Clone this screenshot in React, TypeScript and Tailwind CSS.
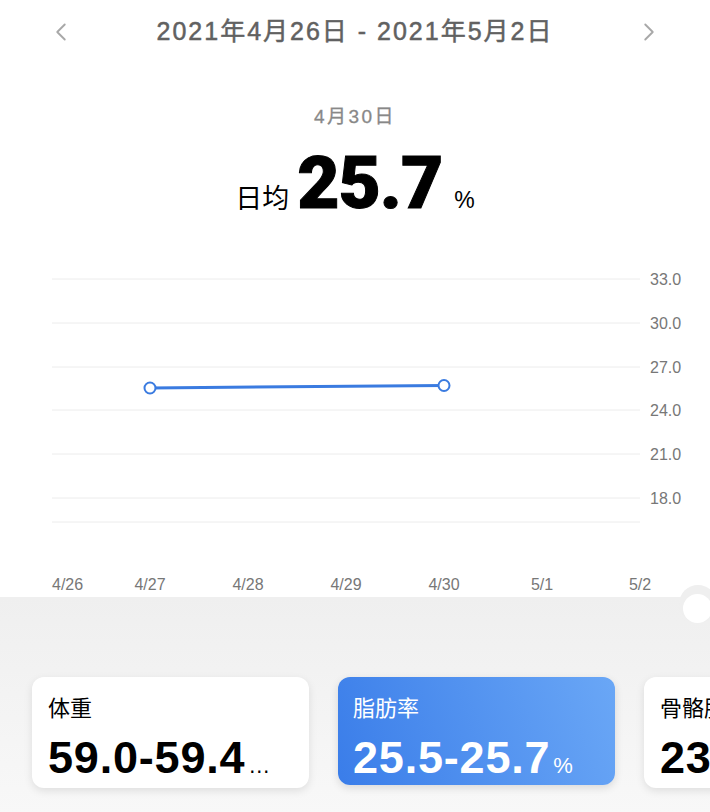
import { ChevronLeft, ChevronRight } from 'lucide-react';

const font = { fontFamily: '"Liberation Sans", "Noto Sans CJK SC", sans-serif' };

const gridY = [29, 73, 117, 160, 204, 248];
const yLabels = ['33.0', '30.0', '27.0', '24.0', '21.0', '18.0'];
const xLabels = [
  { x: 52, t: '4/26', anchor: 'start' },
  { x: 150, t: '4/27', anchor: 'middle' },
  { x: 248, t: '4/28', anchor: 'middle' },
  { x: 346, t: '4/29', anchor: 'middle' },
  { x: 444, t: '4/30', anchor: 'middle' },
  { x: 542, t: '5/1', anchor: 'middle' },
  { x: 640, t: '5/2', anchor: 'middle' },
];

function Chart() {
  return (
    <svg width={710} height={347} className="block">
      {gridY.map((y) => (
        <line key={y} x1={52} x2={640} y1={y} y2={y} stroke="#ececec" strokeWidth={1} />
      ))}
      <line x1={52} x2={640} y1={272} y2={272} stroke="#ececec" strokeWidth={1} />
      {gridY.map((y, i) => (
        <text
          key={i}
          x={650}
          y={y + 5.5}
          fontSize={16}
          fill="#777"
          fontFamily="Liberation Sans, sans-serif"
        >
          {yLabels[i]}
        </text>
      ))}
      <line x1={150} y1={138} x2={444} y2={135.5} stroke="#3a7be0" strokeWidth={3} />
      <circle cx={150} cy={138} r={5.5} fill="#fff" stroke="#3a7be0" strokeWidth={2} />
      <circle cx={444} cy={135.5} r={5.5} fill="#fff" stroke="#3a7be0" strokeWidth={2} />
      {xLabels.map((l) => (
        <text
          key={l.t}
          x={l.x}
          y={340}
          fontSize={16}
          fill="#777"
          textAnchor={l.anchor as 'start' | 'middle'}
          fontFamily="Liberation Sans, sans-serif"
        >
          {l.t}
        </text>
      ))}
    </svg>
  );
}

function Card({
  label,
  value,
  unit,
  active,
}: {
  label: string;
  value: string;
  unit?: string;
  active?: boolean;
}) {
  return (
    <div
      className={
        active
          ? 'w-[277px] h-[108px] shrink-0 rounded-xl px-[15px] pt-[16px] bg-[linear-gradient(70deg,#3a7de9,#6aa7f6)] text-white shadow-[0_3px_8px_rgba(0,0,0,0.12)]'
          : 'w-[277px] h-[111px] shrink-0 rounded-xl px-[16px] pt-[16px] bg-white text-black shadow-[0_3px_8px_rgba(0,0,0,0.10)]'
      }
    >
      <div className="text-[22px] leading-[32px]">{label}</div>
      <div className="mt-[9px] flex items-baseline whitespace-nowrap">
        <span className="text-[45px] leading-[48px] font-bold tracking-[0.8px]">{value}</span>
        {unit && <span className="ml-[3px] text-[22px]">{unit}</span>}
      </div>
    </div>
  );
}

export default function App() {
  return (
    <div className="w-[710px] h-[812px] overflow-hidden bg-white relative" style={font}>
      <div className="h-16 flex items-center justify-between px-[46px] text-[#a8a8a8]">
        <ChevronLeft size={30} strokeWidth={1.5} />
        <div className="text-[25px] text-[#616161] tracking-[2px] [-webkit-text-stroke:0.5px_#616161]">
          2021年4月26日 - 2021年5月2日
        </div>
        <ChevronRight size={30} strokeWidth={1.5} />
      </div>
      <div className="mt-[41px] text-center text-[19px] leading-6 text-[#888] tracking-[2.5px] [-webkit-text-stroke:0.3px_#888]">
        4月30日
      </div>
      <div className="mt-[20px] flex items-baseline justify-center h-[68px]">
        <span className="text-[27px] mr-[8px]">日均</span>
        <span
          className="text-[73px] leading-[68px] font-black tracking-[-1px] [-webkit-text-stroke:1px_#000]"
          style={{ fontFamily: 'Roboto, "Liberation Sans", sans-serif' }}
        >
          25.7
        </span>
        <span className="text-[23px] ml-[12px]">%</span>
      </div>
      <div className="mt-[33px]">
        <Chart />
      </div>
      <div className="relative h-[215px] bg-gradient-to-b from-[#efefef] to-[#f8f8f8] pt-[80px] pl-[32px]">
        <div className="absolute right-[-7px] top-[-12px] w-[38px] h-[38px] rounded-full bg-[#efefef]" />
        <div className="absolute right-[-2px] top-[-3px] w-[29px] h-[29px] rounded-full bg-white" />
        <div className="flex gap-[29px] items-start">
          <Card label="体重" value="59.0-59.4" unit="…" />
          <Card label="脂肪率" value="25.5-25.7" unit="%" active />
          <Card label="骨骼肌" value="23.4-23.5" />
        </div>
      </div>
    </div>
  );
}
